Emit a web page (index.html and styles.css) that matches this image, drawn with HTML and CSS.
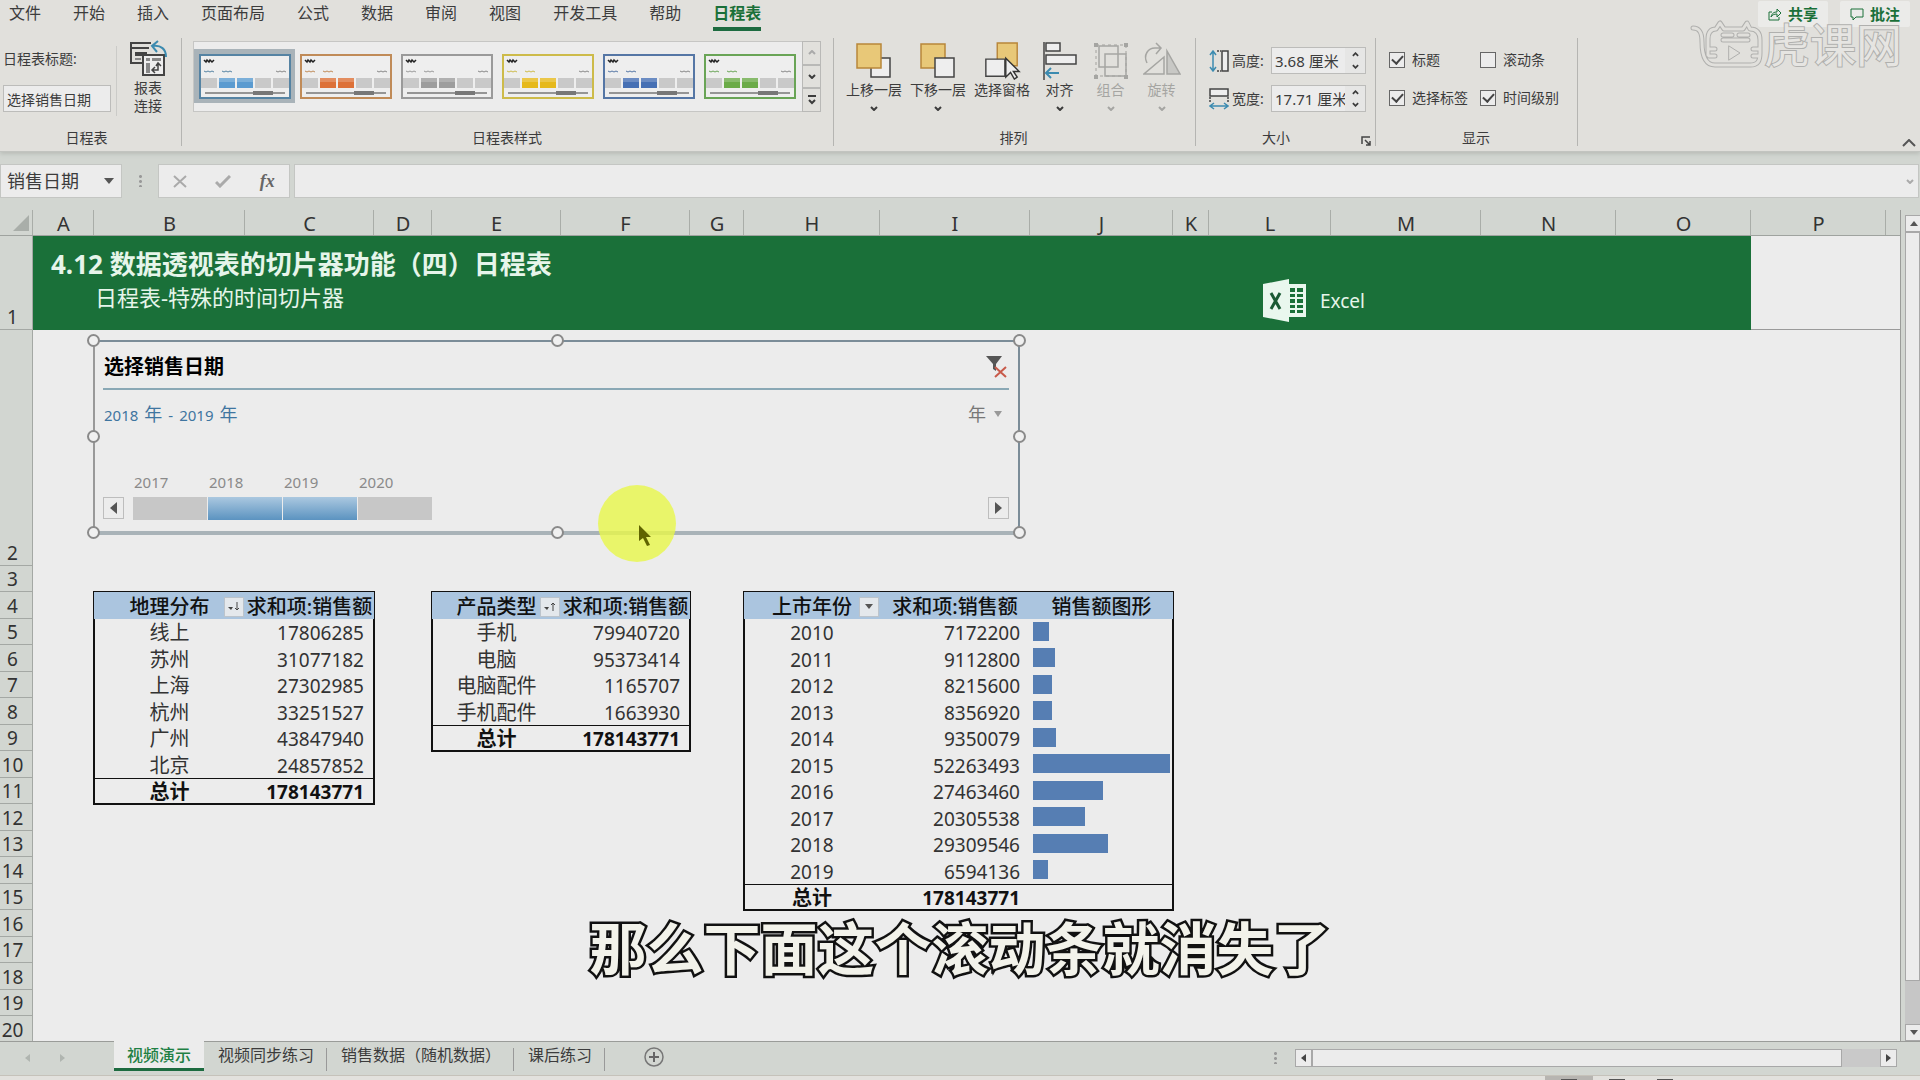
FILE: index.html
```html
<!DOCTYPE html>
<html lang="zh-CN">
<head>
<meta charset="utf-8">
<title>Excel 日程表</title>
<link rel="stylesheet" href="styles.css">
</head>
<body>
<svg class="defs" aria-hidden="true">
  <symbol id="thumb" viewBox="0 0 92 45">
    <rect x="1" y="1" width="90" height="43" fill="#eeeeee" stroke="currentColor" stroke-width="2"/>
    <path d="M5 6l2 2 1-2 2 2 1-2 2 2 2-2" stroke="#222" stroke-width="1.5" fill="none"/>
    <path d="M5 17l2 1 2-1 2 1 2-1 2 1M23 17l2 1 2-1 2 1 2-1 2 1" stroke="currentColor" fill="none"/>
    <path d="M77 17l2 1 2-1 2 1 2-1 2 1" stroke="#888" fill="none"/>
    <path d="M2 24h16v10H2zM56 24h16v10H56zM74 24h16v10H74z" fill="#c9c9c9"/>
    <path d="M20 24h16v10H20zM38 24h16v10H38z" fill="var(--cell)"/>
    <path d="M20 24h16v4H20zM38 24h16v4H38z" fill="#fff" opacity=".2"/>
    <path d="M6 39h80" stroke="#777" stroke-width="1.5"/><path d="M54 39h20" stroke="#777" stroke-width="4"/>
  </symbol>
  <symbol id="down" viewBox="0 0 8 5"><path d="M1 1l3 3 3-3" fill="none" stroke="currentColor" stroke-width="2"/></symbol>
  <symbol id="up" viewBox="0 0 8 5"><path d="M1 4l3-3 3 3" fill="none" stroke="currentColor" stroke-width="2"/></symbol>
</svg>

<header class="ribbon">
  <nav class="tabs">
    <a href="#">文件</a><a href="#">开始</a><a href="#">插入</a><a href="#">页面布局</a><a href="#">公式</a><a href="#">数据</a><a href="#">审阅</a><a href="#">视图</a><a href="#">开发工具</a><a href="#">帮助</a><a href="#" class="current">日程表</a>
    <div class="actions">
      <button><svg width="14" height="14" viewBox="0 0 14 14"><path d="M4 5H1v8h10v-3M3 10c1-4 3-5 6-5V2l4 4-4 4V7C6 7 4 8 3 10z" fill="none" stroke="currentColor"/></svg>共享</button>
      <button><svg width="14" height="14" viewBox="0 0 14 14"><path d="M1 2h12v8H6l-3 3v-3H1z" fill="none" stroke="currentColor"/></svg>批注</button>
    </div>
  </nav>
  <div class="watermark">
    <svg width="74" height="52" viewBox="0 0 74 52" fill="none" stroke-linecap="round" stroke-linejoin="round">
      <g stroke="#b0b0ae" stroke-width="5"><path d="M3 10c7 0 9 5 9 14 0 14 3 23 13 23h35c8 0 10-4 10-12V22c0-7-3-11-10-11l-3-6-4 6H34l-4-6-4 6c-6 0-8 4-8 10v16M33 17h9M49 17h9M33 22h25M19 31h6M19 38h6M63 31h6M63 38h6"/></g>
      <g stroke="#e1e0dc" stroke-width="3"><path d="M3 10c7 0 9 5 9 14 0 14 3 23 13 23h35c8 0 10-4 10-12V22c0-7-3-11-10-11l-3-6-4 6H34l-4-6-4 6c-6 0-8 4-8 10v16M33 17h9M49 17h9M33 22h25M19 31h6M19 38h6M63 31h6M63 38h6"/></g>
      <path d="M39 28l11 7-11 7z" stroke="#b0b0ae"/>
    </svg>
    <span>虎课网</span>
  </div>
  <div class="groups">
    <section class="group g-caption">
      <div class="body">
        <div class="field"><label for="cap">日程表标题:</label><input id="cap" value="选择销售日期"></div>
        <button class="tool report">
          <svg width="38" height="38" viewBox="0 0 38 38" fill="none" stroke="#444" stroke-width="2"><path d="M13 23H2V3h20M2 8h18"/><path d="M6 12h12v4H6z" fill="#444" stroke="none"/><path d="M6 18h6v2H6z" fill="#888" stroke="none"/><path d="M14 15h21v20H14z" fill="#eee"/><path d="M17 18h4v3h-4zM23 18h9v3h-9zM17 23h4v10h-4z" fill="#888" stroke="none"/><path d="M24 30h5v-6M26 27l-3 3 3 3M27 26l2-3 3 3" stroke-width="1.5"/><path d="M37 17c0-8-5-12-13-11M29 1l-6 5 5 6" stroke="#3c8bb0"/></svg>
          <span>报表<br>连接</span>
        </button>
      </div>
      <h2>日程表</h2>
    </section>
    <section class="group g-style">
      <div class="body gallery">
        <button class="style blue on" aria-label="浅蓝"><svg><use href="#thumb"/></svg></button>
        <button class="style orange" aria-label="橙色"><svg><use href="#thumb"/></svg></button>
        <button class="style gray" aria-label="灰色"><svg><use href="#thumb"/></svg></button>
        <button class="style yellow" aria-label="黄色"><svg><use href="#thumb"/></svg></button>
        <button class="style navy" aria-label="深蓝"><svg><use href="#thumb"/></svg></button>
        <button class="style green" aria-label="绿色"><svg><use href="#thumb"/></svg></button>
        <div class="scroller">
          <button class="dim" aria-label="上"><svg class="chev"><use href="#up"/></svg></button>
          <button aria-label="下"><svg class="chev"><use href="#down"/></svg></button>
          <button aria-label="更多"><svg width="10" height="10" viewBox="0 0 10 10"><path d="M1 1h8M2 5l3 3 3-3" fill="none" stroke="currentColor" stroke-width="2"/></svg></button>
        </div>
      </div>
      <h2>日程表样式</h2>
    </section>
    <section class="group g-arrange">
      <div class="body">
        <button class="tool wide"><svg width="36" height="36" viewBox="0 0 36 36"><path d="M15 15h19v19H15z" fill="#eee" stroke="#444" stroke-width="1.5"/><path d="M1 1h24v24H1z" fill="#e8c878" stroke="#b8863a" stroke-width="1.5"/></svg><span>上移一层</span><svg class="chev"><use href="#down"/></svg></button>
        <button class="tool wide"><svg width="36" height="36" viewBox="0 0 36 36"><path d="M1 1h24v24H1z" fill="#e8c878" stroke="#b8863a" stroke-width="1.5"/><path d="M15 15h19v19H15z" fill="#eee" stroke="#444" stroke-width="1.5"/></svg><span>下移一层</span><svg class="chev"><use href="#down"/></svg></button>
        <button class="tool wide"><svg width="38" height="40" viewBox="0 0 38 40"><path d="M14 1h21v24H14z" fill="#e8c878" stroke="#b8863a" stroke-width="1.5"/><path d="M2 18h20v18H2z" fill="#eee" stroke="#444" stroke-width="1.5"/><path d="M23 17v20l5-5 4 7 3-2-4-6h6z" fill="#eee" stroke="#333" stroke-width="1.5"/></svg><span>选择窗格</span></button>
        <button class="tool"><svg width="36" height="38" viewBox="0 0 36 38" fill="none" stroke="#444" stroke-width="1.5"><path d="M2 0v38"/><path d="M4 1h14v8H4zM4 13h30v9H4z" fill="#eee"/><path d="M17 31H4M9 26l-5 5 5 5" stroke="#3c8bb0" stroke-width="2"/></svg><span>对齐</span><svg class="chev"><use href="#down"/></svg></button>
        <button class="tool" disabled><svg width="36" height="38" viewBox="0 0 36 38" fill="none" stroke="currentColor" stroke-width="1.5"><path d="M3 3h30v31H3z" stroke-dasharray="3 3" opacity=".7"/><path d="M6 4h19v21H6zM12 12h21v22H12z" fill="none"/><path d="M1 1h4v4H1zM31 1h4v4h-4zM1 33h4v4H1zM31 33h4v4h-4z" fill="currentColor" stroke="none"/></svg><span>组合</span><svg class="chev"><use href="#down"/></svg></button>
        <button class="tool" disabled><svg width="38" height="36" viewBox="0 0 38 36" fill="none" stroke="currentColor" stroke-width="1.5"><path d="M4 20C0 12 5 5 12 5h5M13 0l5 5-5 6"/><path d="M1 31h20V14z"/><path d="M24 8v23h13z" fill="#c8c8c5"/></svg><span>旋转</span><svg class="chev"><use href="#down"/></svg></button>
      </div>
      <h2>排列</h2>
    </section>
    <section class="group g-size">
      <div class="body">
        <div class="dim-row">
          <svg width="20" height="22" viewBox="0 0 20 22" fill="none" stroke="#444" stroke-width="1.5"><path d="M4 1v20M1 5l3-4 3 4M1 17l3 4 3-4" stroke="#3c8bb0"/><path d="M13 1h6v20h-6z" fill="#eee"/><path d="M8 1h4M8 21h4" stroke-dasharray="2 1"/></svg>
          <label for="h">高度:</label>
          <div class="spin"><input id="h" value="3.68 厘米"><div><button aria-label="增"><svg class="mini"><use href="#up"/></svg></button><button aria-label="减"><svg class="mini"><use href="#down"/></svg></button></div></div>
        </div>
        <div class="dim-row">
          <svg width="20" height="22" viewBox="0 0 20 22" fill="none" stroke="#444" stroke-width="1.5"><path d="M1 1h18v7H1z" fill="#eee"/><path d="M1 9v6M19 9v6" stroke-dasharray="2 1"/><path d="M1 18h18M5 15l-4 3 4 3M15 15l4 3-4 3" stroke="#3c8bb0"/></svg>
          <label for="w">宽度:</label>
          <div class="spin"><input id="w" value="17.71 厘米"><div><button aria-label="增"><svg class="mini"><use href="#up"/></svg></button><button aria-label="减"><svg class="mini"><use href="#down"/></svg></button></div></div>
        </div>
      </div>
      <h2>大小</h2>
      <button class="launcher" aria-label="更多选项"><svg width="10" height="10" viewBox="0 0 10 10"><path d="M1 8V1h8M4 4l5 5M9 5v4H5" fill="none" stroke="#444" stroke-width="1.5"/></svg></button>
    </section>
    <section class="group g-show">
      <div class="body">
        <label><input type="checkbox" checked>标题</label><label><input type="checkbox">滚动条</label>
        <label><input type="checkbox" checked>选择标签</label><label><input type="checkbox" checked>时间级别</label>
      </div>
      <h2>显示</h2>
    </section>
    <button class="collapse" aria-label="折叠功能区"><svg width="14" height="8" viewBox="0 0 14 8"><path d="M1 7l6-6 6 6" fill="none" stroke="#555" stroke-width="2"/></svg></button>
  </div>
</header>

<div class="formula-bar">
  <div class="name-box"><input aria-label="名称框" value="销售日期"><button aria-label="名称列表"><svg width="10" height="6" viewBox="0 0 10 6"><path d="M0 0h10L5 6z" fill="#555"/></svg></button></div>
  <i class="dots"></i>
  <div class="fx">
    <button aria-label="取消"><svg width="14" height="13" viewBox="0 0 14 13"><path d="M1 1l12 11M13 1L1 12" stroke="#aaa" stroke-width="2"/></svg></button>
    <button aria-label="输入"><svg width="16" height="13" viewBox="0 0 16 13"><path d="M1 7l4 4L15 1" fill="none" stroke="#aaa" stroke-width="3"/></svg></button>
    <button class="fn">fx</button>
  </div>
  <div class="formula"><input aria-label="编辑栏"><svg class="chev"><use href="#down"/></svg></div>
</div>

<main class="work">
  <div class="sheet">
    <div class="ch corner"><svg width="16" height="16" viewBox="0 0 16 16"><path d="M16 0v16H0z" fill="#a9aea9"/></svg></div>
    <div class="ch">A</div><div class="ch">B</div><div class="ch">C</div><div class="ch">D</div><div class="ch">E</div><div class="ch">F</div><div class="ch">G</div><div class="ch">H</div><div class="ch">I</div><div class="ch">J</div><div class="ch">K</div><div class="ch">L</div><div class="ch">M</div><div class="ch">N</div><div class="ch">O</div><div class="ch">P</div><div class="ch last"></div>
    <div class="rh">1</div><div class="rh">2</div><div class="rh">3</div><div class="rh">4</div><div class="rh">5</div><div class="rh">6</div><div class="rh">7</div><div class="rh">8</div><div class="rh">9</div><div class="rh">10</div><div class="rh">11</div><div class="rh">12</div><div class="rh">13</div><div class="rh">14</div><div class="rh">15</div><div class="rh">16</div><div class="rh">17</div><div class="rh">18</div><div class="rh">19</div><div class="rh">20</div>

    <div class="banner">
      <div><h1>4.12 数据透视表的切片器功能（四）日程表</h1><p>日程表-特殊的时间切片器</p></div>
      <div class="brand">
        <svg width="44" height="44" viewBox="0 0 44 44"><path d="M24 5h19v33H24z" fill="#e9f7ee"/><path d="M27 9h5v4h-5zM34 9h6v4h-6zM27 15h5v3h-5zM34 15h6v3h-6zM27 20h5v4h-5zM34 20h6v4h-6zM27 26h5v3h-5zM34 26h6v3h-6zM27 31h5v3h-5zM34 31h6v3h-6z" fill="#1a7039"/><path d="M0 5l26-5v43L0 38z" fill="#e9f7ee"/><path d="M8 14l9 16M17 14L8 30" stroke="#1a5a34" stroke-width="3"/></svg>
        <span>Excel</span>
      </div>
    </div>
    <div class="freeze"></div>

    <section class="timeline">
      <div class="tl-head"><h3>选择销售日期</h3><button aria-label="清除筛选器"><svg width="22" height="22" viewBox="0 0 22 22"><path d="M0 0h16l-6 8v7l-3-2V8z" fill="#555"/><path d="M9 11l11 10M20 11L9 21" stroke="#c85a4a" stroke-width="2"/></svg></button></div>
      <div class="tl-info"><p><b>2018</b><span>年</span><b>-</b><b>2019</b><span>年</span></p>
        <label class="level"><select aria-label="时间级别"><option>年</option></select><svg width="8" height="6" viewBox="0 0 8 6"><path d="M0 0h8L4 6z" fill="#999"/></svg></label></div>
      <div class="tl-track">
        <button class="nav" aria-label="向左"><svg width="7" height="12" viewBox="0 0 7 12"><path d="M7 0v12L0 6z" fill="#555"/></svg></button>
        <div class="periods">
          <div>2017<button aria-label="2017"></button></div><div>2018<button class="sel" aria-label="2018"></button></div><div>2019<button class="sel" aria-label="2019"></button></div><div>2020<button aria-label="2020"></button></div>
        </div>
        <button class="nav" aria-label="向右"><svg width="7" height="12" viewBox="0 0 7 12"><path d="M0 0v12l7-6z" fill="#555"/></svg></button>
      </div>
      <i class="knob l t"></i><i class="knob c t"></i><i class="knob r t"></i><i class="knob l m"></i><i class="knob r m"></i><i class="knob l b"></i><i class="knob c b"></i><i class="knob r b"></i>
      <div class="pointer"><svg width="14" height="22" viewBox="0 0 14 22"><path d="M1 0v16l4-3 4 8 3-1-4-8h5z" fill="#5f6400"/></svg></div>
    </section>

    <table class="pivot p1">
      <colgroup><col><col class="c129"></colgroup>
      <thead><tr><th>地理分布<button aria-label="筛选"><svg width="12" height="12" viewBox="0 0 12 12"><path d="M0 6h5L3 9z" fill="#444"/><path d="M9 1v8M7 7l2 2 2-2" fill="none" stroke="#444"/></svg></button></th><th>求和项:销售额</th></tr></thead>
      <tbody>
        <tr><td>线上</td><td class="n">17806285</td></tr><tr><td>苏州</td><td class="n">31077182</td></tr><tr><td>上海</td><td class="n">27302985</td></tr><tr><td>杭州</td><td class="n">33251527</td></tr><tr><td>广州</td><td class="n">43847940</td></tr><tr><td>北京</td><td class="n">24857852</td></tr>
        <tr class="total"><td>总计</td><td class="n">178143771</td></tr>
      </tbody>
    </table>
    <table class="pivot p2">
      <colgroup><col><col class="c129"></colgroup>
      <thead><tr><th>产品类型<button aria-label="筛选"><svg width="12" height="12" viewBox="0 0 12 12"><path d="M0 6h5L3 9z" fill="#444"/><path d="M9 10V2M7 4l2-2 2 2" fill="none" stroke="#444"/></svg></button></th><th>求和项:销售额</th></tr></thead>
      <tbody>
        <tr><td>手机</td><td class="n">79940720</td></tr><tr><td>电脑</td><td class="n">95373414</td></tr><tr><td>电脑配件</td><td class="n">1165707</td></tr><tr><td>手机配件</td><td class="n">1663930</td></tr>
        <tr class="total"><td>总计</td><td class="n">178143771</td></tr>
      </tbody>
    </table>
    <table class="pivot p3">
      <colgroup><col><col class="c150"><col class="c143"></colgroup>
      <thead><tr><th>上市年份<button aria-label="筛选"><svg width="8" height="6" viewBox="0 0 8 6"><path d="M0 0h8L4 5z" fill="#555"/></svg></button></th><th>求和项:销售额</th><th>销售额图形</th></tr></thead>
      <tbody>
        <tr><td>2010</td><td class="n">7172200</td><td class="g"><i style="width:12%"></i></td></tr>
        <tr><td>2011</td><td class="n">9112800</td><td class="g"><i style="width:16%"></i></td></tr>
        <tr><td>2012</td><td class="n">8215600</td><td class="g"><i style="width:14%"></i></td></tr>
        <tr><td>2013</td><td class="n">8356920</td><td class="g"><i style="width:14%"></i></td></tr>
        <tr><td>2014</td><td class="n">9350079</td><td class="g"><i style="width:17%"></i></td></tr>
        <tr><td>2015</td><td class="n">52263493</td><td class="g"><i style="width:100%"></i></td></tr>
        <tr><td>2016</td><td class="n">27463460</td><td class="g"><i style="width:51%"></i></td></tr>
        <tr><td>2017</td><td class="n">20305538</td><td class="g"><i style="width:38%"></i></td></tr>
        <tr><td>2018</td><td class="n">29309546</td><td class="g"><i style="width:55%"></i></td></tr>
        <tr><td>2019</td><td class="n">6594136</td><td class="g"><i style="width:11%"></i></td></tr>
        <tr class="total"><td>总计</td><td class="n">178143771</td><td></td></tr>
      </tbody>
    </table>
  </div>
  <div class="vscroll">
    <button aria-label="向上滚动"><svg width="8" height="5" viewBox="0 0 8 5"><path d="M0 5h8L4 0z" fill="#555"/></svg></button>
    <div class="thumb"></div>
    <button aria-label="向下滚动"><svg width="8" height="5" viewBox="0 0 8 5"><path d="M0 0h8L4 5z" fill="#555"/></svg></button>
  </div>
  <p class="caption">那么下面这个滚动条就消失了</p>
</main>

<footer>
  <div class="sheet-bar">
    <div class="arrows"><svg width="5" height="8" viewBox="0 0 5 8"><path d="M5 0v8L0 4z" fill="#b0b5b0"/></svg><svg width="5" height="8" viewBox="0 0 5 8"><path d="M0 0v8l5-4z" fill="#b0b5b0"/></svg></div>
    <nav class="sheets"><a href="#" class="active">视频演示</a><a href="#">视频同步练习</a><a href="#">销售数据（随机数据）</a><a href="#">课后练习</a></nav>
    <button class="add" aria-label="新工作表"><svg width="20" height="20" viewBox="0 0 20 20"><path d="M10 5v10M5 10h10" stroke="#666" stroke-width="2"/><circle cx="10" cy="10" r="9" fill="none" stroke="#777" stroke-width="1.5"/></svg></button>
    <i class="dots"></i>
    <div class="hscroll">
      <button aria-label="向左滚动"><svg width="5" height="8" viewBox="0 0 5 8"><path d="M5 0v8L0 4z" fill="#444"/></svg></button>
      <div class="thumb"></div>
      <button aria-label="向右滚动"><svg width="5" height="8" viewBox="0 0 5 8"><path d="M0 0v8l5-4z" fill="#444"/></svg></button>
    </div>
  </div>
  <div class="status"><i class="on"></i><i></i><i></i></div>
</footer>
</body>
</html>
```
FILE: styles.css
```css
* { box-sizing: border-box; margin: 0; padding: 0; }
:root {
  --ribbon: #e1e0dc;
  --chrome: #d2d6d1;
  --paper: #ececec;
  --line: #bcbcba;
  --ink: #3c3c3c;
  --green: #1a7039;
}
html, body { height: 100%; }
body {
  display: flex; flex-direction: column; overflow: hidden;
  background: var(--chrome); color: var(--ink);
  font: 14px/20px "Noto Sans", "Noto Sans CJK SC", sans-serif;
}
button, input, select { font: inherit; color: inherit; background: none; border: 0; outline: 0; }
a { color: inherit; text-decoration: none; }
h1, h2, h3, b { font-weight: 400; }
svg { display: block; flex: none; }
.defs { position: absolute; width: 0; height: 0; }
.chev { width: 8px; height: 5px; }
.mini { width: 7px; height: 5px; }
input { min-width: 0; }

/* Ribbon */
.ribbon { position: relative; flex: none; background: var(--ribbon); border-bottom: 1px solid #c2c4c0; box-shadow: 0 2px 4px #b9bdb8; }
.tabs { display: flex; gap: 32px; height: 31px; padding-left: 9px; font-size: 16px; line-height: 26px; }
.tabs a { height: 31px; white-space: nowrap; }
.tabs .current { color: var(--green); font-weight: 700; border-bottom: 4px solid #1d6b40; }
.actions { display: flex; gap: 12px; margin: 1px 10px 0 auto; }
.actions button { display: flex; align-items: center; justify-content: center; gap: 6px; width: 70px; height: 26px; background: #ebebe9; color: var(--green); font-weight: 700; font-size: 15px; line-height: 20px; border-radius: 2px; }
.watermark { position: absolute; right: 18px; top: 18px; display: flex; align-items: center; font-size: 46px; line-height: 52px; color: #e6e5e2; -webkit-text-stroke: 2px #b0b0ae; paint-order: stroke fill; }
.groups { display: flex; padding-top: 7px; height: 120px; }
.group { position: relative; display: flex; flex-direction: column; height: 108px; border-right: 1px solid #b5b5b2; }
.group .body { display: flex; height: 88px; }
.group h2 { height: 20px; font-size: 14px; line-height: 20px; text-align: center; padding-top: 2px; }
.g-caption { width: 182px; }
.g-caption h2 { padding-right: 8px; }
.field { width: 117px; margin: 8px 0 10px; padding: 3px 6px 0 3px; border-right: 1px solid #cbcbc8; display: flex; flex-direction: column; gap: 16px; }
.field input { width: 108px; height: 27px; padding: 0 3px; border: 1px solid var(--line); background: var(--paper); }
.tool { display: flex; flex-direction: column; align-items: center; width: 51px; padding-top: 4px; line-height: 18px; white-space: nowrap; }
.tool > svg:first-child { height: 38px; }
.tool > span { height: 20px; margin: 1px 0 5px; }
.tool.wide { width: 64px; }
.tool:disabled { color: #a5a5a2; }
.tool.report { width: 62px; padding-top: 2px; }
.g-style { width: 652px; padding: 0 12px 0 11px; }
.g-style .gallery { height: 71px; margin: 3px 0 14px; background: var(--paper); border: 1px solid #c6c6c4; }
.style { width: 101px; height: 54px; margin-top: 7px; display: grid; place-items: center; }
.style svg { width: 92px; height: 45px; }
.style.on { background: #a9b3b9; }
.blue { color: #5583a3; --cell: #5b9bd0; }
.orange { color: #c08b58; --cell: #dd7138; }
.gray { color: #9a9a9a; --cell: #9d9d9d; }
.yellow { color: #cdbb4a; --cell: #e6b91c; }
.navy { color: #5576a5; --cell: #4670b4; }
.green { color: #69a456; --cell: #6bab48; }
.scroller { display: flex; flex-direction: column; width: 19px; margin: -1px -1px -1px auto; }
.scroller button { flex: 1; display: grid; place-items: center; border: 1px solid #b9b9b7; background: var(--ribbon); }
.scroller .dim { color: #aaa; }
.g-arrange { width: 362px; padding: 0 0 0 8px; }
.g-arrange h2 { padding-right: 10px; }
.g-size { width: 180px; padding: 0 9px 0 13px; }
.g-size .body { flex-direction: column; gap: 11px; padding-top: 9px; }
.g-size h2 { padding-right: 23px; }
.dim-row { display: flex; align-items: center; gap: 3px; height: 27px; }
.spin { display: flex; width: 95px; height: 27px; margin-left: auto; border: 1px solid var(--line); background: var(--paper); }
.spin input { flex: 1; padding-left: 3px; font-size: 15px; }
.spin div { width: 20px; display: flex; flex-direction: column; background: #e6e6e5; }
.spin button { flex: 1; display: grid; place-items: center; }
.launcher { position: absolute; right: 4px; bottom: 0; }
.g-show { width: 202px; padding-left: 13px; }
.g-show h2 { padding-right: 14px; }
.g-show .body { display: grid; grid-template-columns: 91px 1fr; grid-template-rows: 27px 27px; row-gap: 11px; padding-top: 8px; }
.g-show label { display: flex; align-items: center; gap: 7px; white-space: nowrap; }
.g-show input { appearance: none; width: 16px; height: 16px; border: 1px solid #666; background: var(--paper); display: grid; place-items: center; }
.g-show input:checked::after { content: ""; width: 5px; height: 9px; margin-top: -3px; border: solid #444; border-width: 0 2px 2px 0; rotate: 42deg; }
.collapse { margin: auto 4px 4px auto; }

/* Formula bar */
.formula-bar { display: flex; flex: none; height: 58px; padding: 12px 1px 12px 0; }
.formula-bar > div { display: flex; align-items: center; background: var(--paper); border: 1px solid #c4c6c3; }
.name-box { width: 122px; border-left: 0; font-size: 18px; }
.name-box input { flex: 1; padding-left: 6px; }
.name-box button { padding: 0 7px; }
.dots { width: 3px; height: 13px; background: radial-gradient(circle, #999 1px, transparent 2px) 0 0 / 3px 5px; }
.formula-bar .dots { margin: 10px 16px 0 17px; }
.fx { width: 132px; justify-content: space-around; margin-right: 4px; }
.fn { font: italic 700 18px/20px "Liberation Serif", serif; color: #666; }
.formula { flex: 1; padding-right: 4px; color: #aaa; }
.formula input { flex: 1; }

/* Worksheet */
.work { position: relative; flex: 1; min-height: 0; display: flex; }
.sheet {
  flex: 1; overflow: hidden; background: var(--paper); border-right: 1px solid #9a9c99; display: grid;
  grid-template-columns: 33px 61px 151px 129px 58px 129px 129px 54px 136px 150px 143px 36px 122px 150px 135px 135px 135px 1fr;
  grid-template-rows: 26px 94px 236px repeat(9, 26px 27px);
}
.ch { grid-row: 1; background: linear-gradient(90deg, #a9ada8, #a9ada8) right / 1px 100% no-repeat var(--chrome); border-bottom: 1px solid #9fa39f; color: #333; font-size: 20px; line-height: 27px; text-align: center; }
.ch.last { background: var(--chrome); }
.corner { display: flex; align-items: end; justify-content: end; padding: 0 4px 4px 0; }
.rh { grid-column: 1; display: flex; align-items: end; justify-content: center; padding-right: 7px; background: var(--chrome); border: solid #a4a8a4; border-width: 0 1px 1px 0; color: #333; font-size: 19px; line-height: 23px; }
.banner { grid-area: 2 / 2 / 3 / 17; display: flex; background: var(--green); color: #e6f5ea; padding: 10px 0 0 18px; }
.banner h1 { font-size: 26px; line-height: 36px; font-weight: 700; }
.banner p { padding-left: 44px; font-size: 22px; line-height: 30px; }
.banner > div:first-child { width: 1212px; }
.brand { display: flex; align-items: center; gap: 13px; height: 44px; margin-top: 33px; font-size: 19px; }
.freeze { grid-area: 2 / 17 / 3 / 19; border-bottom: 1px solid #9a9a9a; }

.timeline { position: relative; grid-area: 3 / 3 / 4 / 12; width: 927px; height: 195px; margin: 10px 0 0 -1px; padding: 0 9px 0 8px; border: 2px solid #7b8c98; border-left-color: #999; border-bottom: 4px solid #a9b3b8; }
.tl-head { display: flex; justify-content: space-between; align-items: center; height: 48px; padding: 4px 1px 0; border-bottom: 2px solid #8aa8b5; }
.tl-head h3 { font-size: 20px; font-weight: 700; color: #000; }
.tl-info { display: flex; justify-content: space-between; align-items: center; height: 48px; padding: 0 7px 0 1px; }
.tl-info p { display: flex; align-items: baseline; gap: 6px; font-size: 15px; color: #3f75a0; }
.tl-info p span { font-size: 18px; }
.level { display: flex; align-items: center; gap: 8px; color: #777; }
.level select { appearance: none; font-size: 18px; }
.tl-track { display: flex; align-items: end; margin-top: 34px; }
.nav { width: 21px; height: 22px; display: grid; place-items: center; border: 1px solid #bdbdbd; margin-bottom: 1px; }
.periods { flex: 1; display: flex; gap: 1px; padding-left: 9px; font-size: 15px; color: #8a8a8a; }
.periods div { width: 74px; text-indent: 1px; }
.periods button { display: block; width: 100%; height: 23px; margin-top: 5px; background: #c7c7c7; }
.periods .sel { background: linear-gradient(#abc8e0, #5b93c0); }
.knob { position: absolute; width: 13px; height: 13px; border: 2px solid #8a8a8a; border-radius: 50%; background: #f0f0f0; }
.l { left: -8px; } .c { left: 456px; } .r { right: -8px; }
.t { top: -8px; } .m { top: 88px; } .b { bottom: -8px; }
.pointer { position: absolute; left: 503px; top: 143px; width: 78px; height: 77px; border-radius: 50%; background: #e9f74acc; padding: 40px 0 0 40px; }

.pivot { border-spacing: 0; table-layout: fixed; width: 100%; outline: 2px solid #111; outline-offset: -1px; align-self: start; font-size: 20px; line-height: 24px; color: #333; }
.p1 { grid-area: 5 / 3 / 13 / 5; }
.p2 { grid-area: 5 / 6 / 11 / 8; }
.p3 { grid-area: 5 / 9 / 17 / 12; }
.c129 { width: 129px; } .c150 { width: 150px; } .c143 { width: 143px; }
.pivot tr { height: 27px; }
.pivot tbody tr:nth-child(odd) { height: 26px; }
.pivot th { position: relative; background: #abc5df; color: #111; font-weight: 500; white-space: nowrap; }
.pivot th, .pivot td { text-align: center; overflow: hidden; padding: 2px 0 0; }
.pivot th button { position: absolute; right: 1px; top: 5px; width: 20px; height: 20px; display: grid; place-items: center; background: #e4e8ec; border: 1px solid #bcc4cc; }
.pivot .n, .p3 tbody tr:not(.total) td:first-child { font-size: 19px; }
.pivot .n { text-align: right; padding-right: 10px; }
.pivot .g { padding: 0 3px; vertical-align: top; }
.g i { display: block; height: 19px; margin-top: 3px; background: #567eb3; }
.pivot .total td { border-top: 1px solid #111; color: #111; font-weight: 700; padding-top: 1px; }

.vscroll { flex: none; width: 15px; margin: 5px 0 0 4px; display: flex; flex-direction: column; background: #c6c6c6; }
.vscroll button, .hscroll button { display: grid; place-items: center; flex: none; width: 17px; height: 17px; border: 1px solid #a8a8a8; background: var(--paper); }
.vscroll .thumb { flex: 1; margin-bottom: 43px; background: var(--paper); border: 1px solid #a8a8a8; }
.caption { position: absolute; left: 0; right: 0; bottom: 60px; text-align: center; font: 700 57px/72px "Noto Sans CJK SC", sans-serif; color: #f2f2ea; -webkit-text-stroke: 5px #111; paint-order: stroke fill; }

/* Sheet tabs and status */
footer { flex: none; }
.sheet-bar { display: flex; height: 34px; border-top: 1px solid #9a9c99; }
.arrows { display: flex; gap: 30px; width: 114px; padding: 12px 0 0 25px; }
.sheets { display: flex; gap: 1px; font-size: 16px; line-height: 26px; }
.sheets a { padding: 0 13px; height: 29px; background: linear-gradient(#999, #999) right 6px / 1px 24px no-repeat; white-space: nowrap; }
.sheets .active { margin-top: -1px; height: 30px; line-height: 28px; color: #1f8044; background: var(--paper); border-bottom: 3px solid #1d6b40; font-weight: 500; }
.add { margin: 5px auto 9px 39px; }
.sheet-bar .dots { margin: 9px 18px 0 0; }
.hscroll { display: flex; width: 602px; height: 18px; margin: 7px 23px 0 0; background: #c9c9c9; }
.hscroll button { height: 18px; }
.hscroll .thumb { flex: 1; margin-right: 38px; background: var(--paper); border: 1px solid #a8a8a8; }
.status { display: flex; justify-content: end; height: 5px; padding-right: 231px; background: #e2e1dd; border-top: 1px solid #c5c2ba; }
.status i { width: 48px; border: solid #555; border-width: 0 0 1px; border-image: linear-gradient(90deg, transparent 16px, #555 16px 32px, transparent 32px) 1; }
.status .on { background: #b7b5b1; }
```
